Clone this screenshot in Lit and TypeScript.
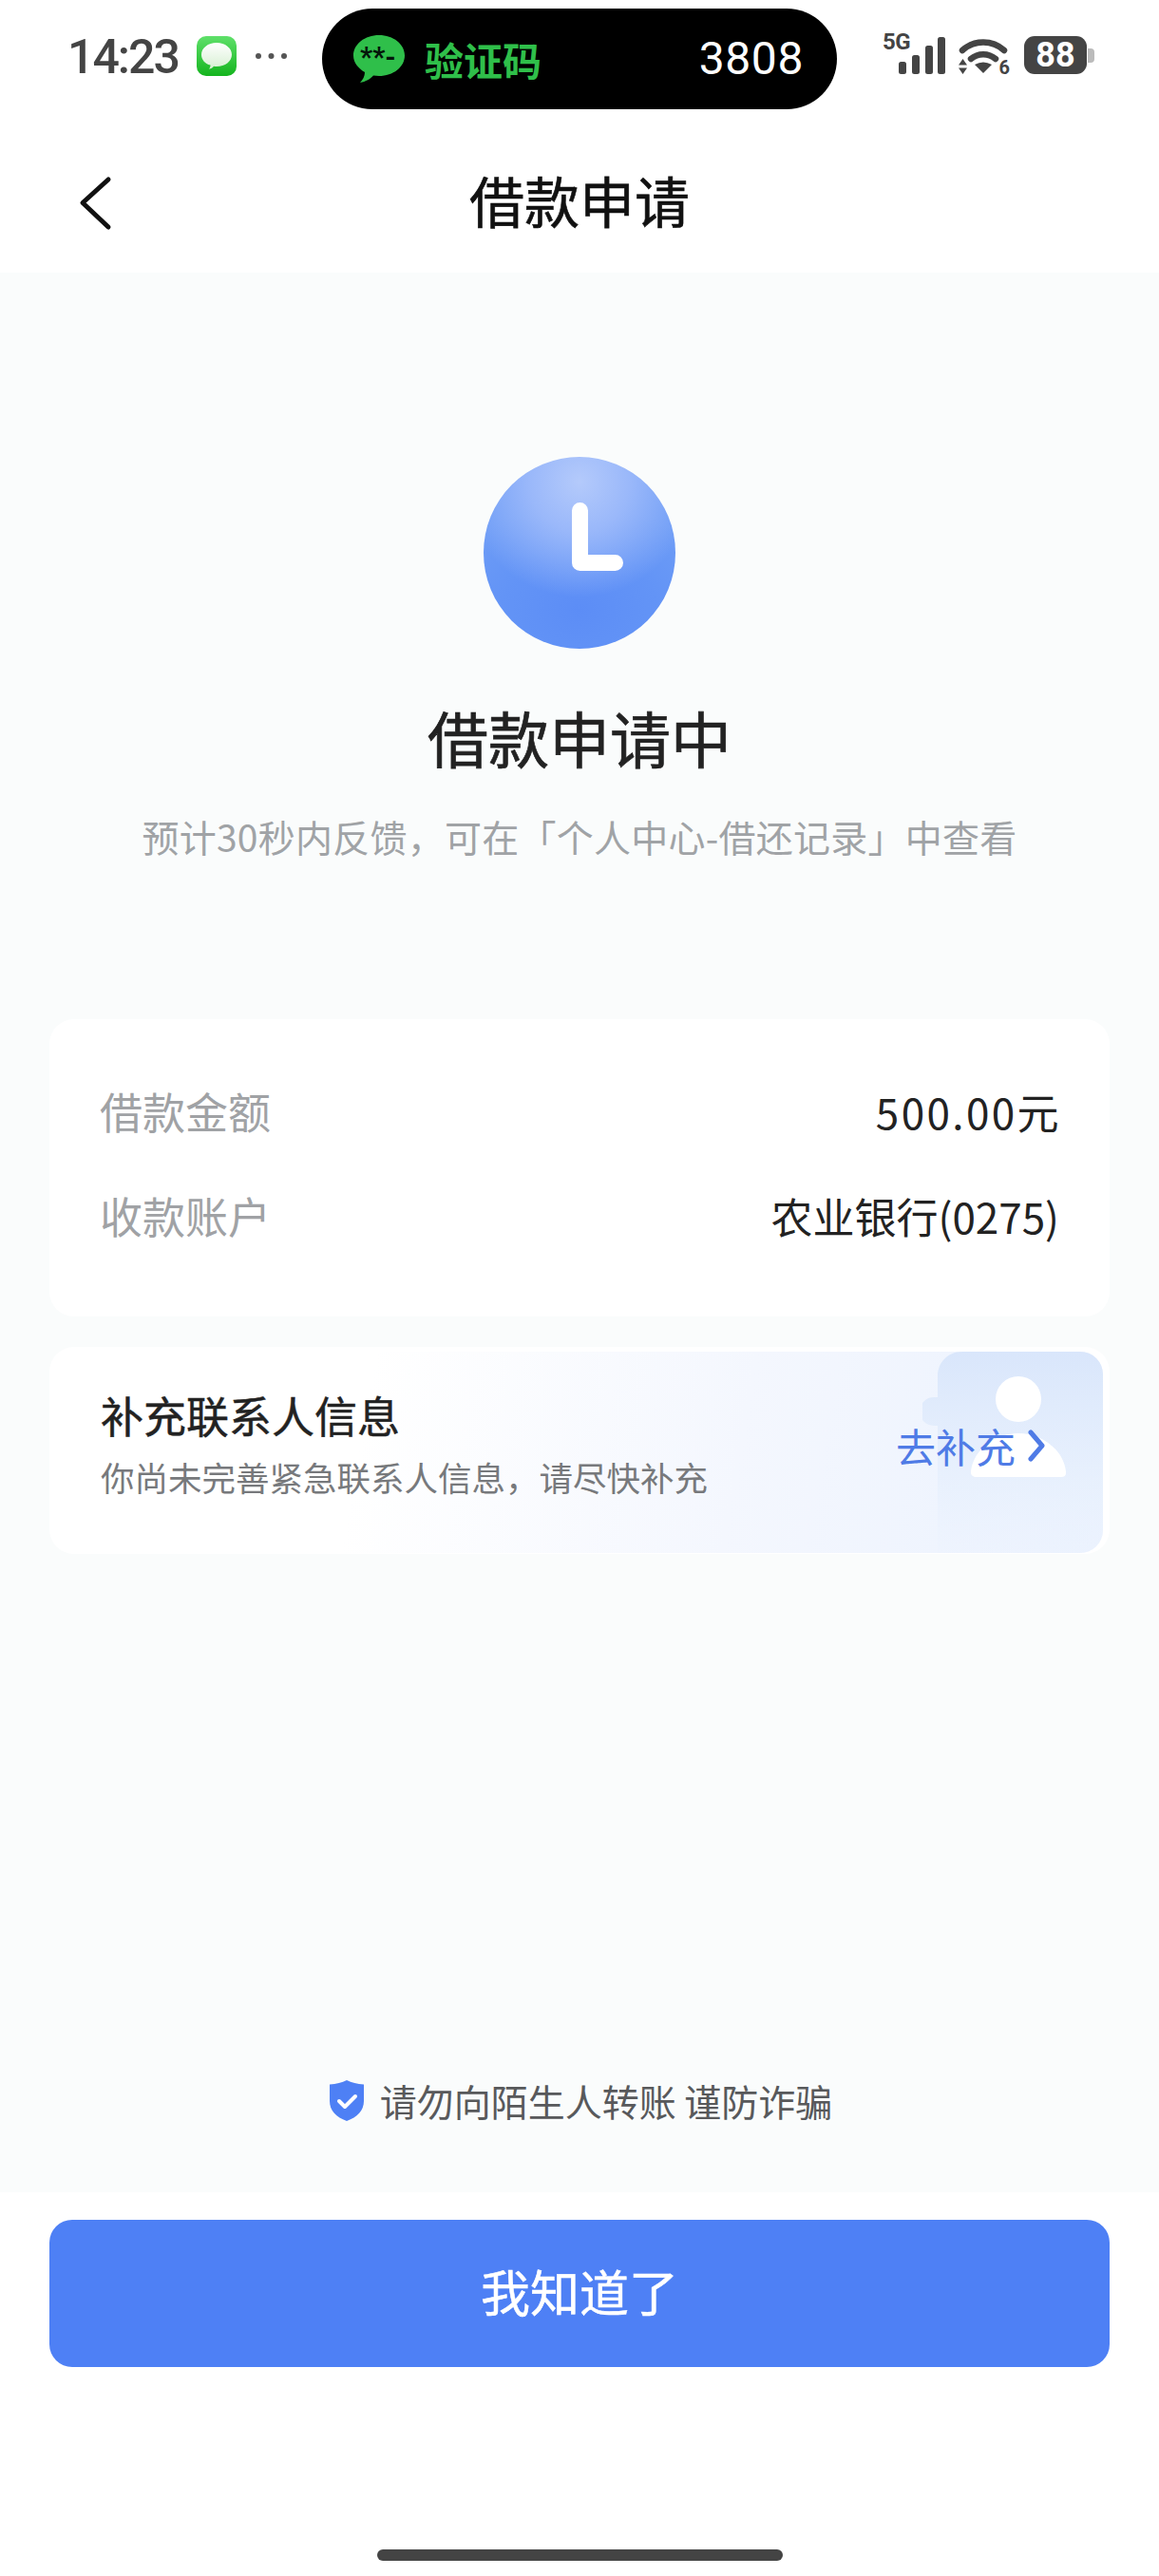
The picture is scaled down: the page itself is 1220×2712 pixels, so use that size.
import { LitElement, html, css } from "lit";
import { customElement } from "lit/decorators.js";

@customElement("app-root")
export class AppRoot extends LitElement {
  static styles = css`
    :host { display: flex; flex-direction: column; width: 1220px; height: 2712px; background: #fff; overflow: hidden;
      font-family: "Noto Sans CJK SC", "Noto Sans", sans-serif; color: #222; }
    * { box-sizing: border-box; }
    svg { display: block; flex: none; }
    .status { height: 125px; display: flex; align-items: flex-start; padding-left: 71px; position: relative; }
    .time { font: 500 50px/50px Roboto, sans-serif; letter-spacing: -2px; color: #444; margin-top: 35px; width: 136px; white-space: nowrap; }
    .msg { margin-top: 38px; }
    .dots { margin: 54px 0 0 19px; }
    .pill { width: 542px; height: 106px; margin: 9px 0 0 36px; background: #000; border-radius: 53px; display: flex; align-items: center; padding: 0 35px 0 33px; }
    .pill-name { font-size: 41px; line-height: 50px; font-weight: 700; color: #2fbf4a; margin-left: 21px; flex: 1; }
    .pill-code { font: 400 48px/50px Roboto, sans-serif; color: #fff; letter-spacing: 0.6px; }
    .net { position: relative; width: 117px; height: 50px; margin: 33px 0 0 65px; }
    .net-5g { position: absolute; left: -17px; top: 0; font: 700 24px/22px Roboto, sans-serif; color: #444; letter-spacing: -0.5px; }
    .net-6 { position: absolute; right: 0; bottom: 3px; font: 700 20px/18px Roboto, sans-serif; color: #444; }
    .battery { position: relative; width: 66px; height: 40px; margin: 38px 0 0 15px; background: #444; border-radius: 11px; color: #fff;
      font: 700 36px/40px Roboto, sans-serif; text-align: center; }
    .battery::after { content: ""; position: absolute; left: 67px; top: 13px; width: 7px; height: 15px; background: #bbb; border-radius: 0 4px 4px 0; }
    .nav { height: 162px; position: relative; display: flex; align-items: center; justify-content: center; }
    .back { position: absolute; left: 82px; top: 60px; }
    .nav-title { font-size: 58px; line-height: 70px; font-weight: 400; -webkit-text-stroke: 0.6px #111; color: #111; margin-top: 8px; }
    main { flex: 1; background: #fafcfc; display: flex; flex-direction: column; align-items: center; padding: 194px 52px 72px; }
    .clock { width: 202px; height: 202px; border-radius: 50%; flex: none; display: flex;
      background: radial-gradient(circle at 50% 13%, #b4cafb 0, #9ab8fa 26%, rgba(142,176,249,0) 60%),
        radial-gradient(ellipse 75% 55% at 50% 80%, #5c8df6 0, #6394f6 55%, #6d9cf6 100%); }
    .title { margin-top: 47px; font-size: 64px; line-height: 90px; font-weight: 400; -webkit-text-stroke: 0.7px #222; color: #222; }
    .sub { margin-top: 35px; font-size: 39px; line-height: 50px; letter-spacing: 0.25px; color: #a0a3a6; white-space: nowrap; }
    .card { width: 100%; background: #fff; border-radius: 26px; flex: none; }
    .info { margin-top: 168px; padding: 67px 53px 76px; display: flex; flex-direction: column; gap: 50px; }
    .row { display: flex; justify-content: space-between; align-items: center; height: 60px; font-size: 45px; line-height: 60px; }
    .row .label { color: #a0a2a5; }
    .row .value { color: #222; font-size: 44px; }
    .row .amount { letter-spacing: 2.4px; margin-right: -2px; }
    .contact { margin-top: 32px; height: 218px; padding: 5px 7px 0 0; position: relative; }
    .contact-bg { height: 212px; border-radius: 0 24px 24px 0; background: linear-gradient(100deg, rgba(255,255,255,0) 30%, #f4f7fe 65%, #ebf2fe 100%); position: relative; overflow: hidden; }
    .decor { position: absolute; right: 0; top: 0; }
    .contact-text { position: absolute; left: 54px; top: 42px; }
    .contact-title { font-size: 45px; line-height: 60px; font-weight: 400; -webkit-text-stroke: 0.5px #222; color: #222; }
    .contact-sub { font-size: 35.5px; line-height: 50px; color: #77797c; margin-top: 10px; white-space: nowrap; }
    .go { position: absolute; left: 891px; top: 74px; display: flex; align-items: center; gap: 13px; font-size: 42px; line-height: 60px; color: #4f7be6; }
    .notice { margin-top: auto; margin-left: 3px; display: flex; align-items: center; gap: 17px; font-size: 39px; line-height: 50px; color: #58595b; white-space: nowrap; }
    footer { height: 404px; background: #fff; padding: 29px 52px 0; display: flex; flex-direction: column; align-items: center; }
    .btn { width: 100%; height: 155px; background: #4e80f5; border-radius: 24px; color: #fff; font-size: 52px; font-weight: 400; -webkit-text-stroke: 0.5px #fff; line-height: 150px; text-align: center; }
    .home { width: 427px; height: 12px; border-radius: 6px; background: #444; margin-top: 192px; }
  `;

  render() {
    return html`
      <header>
        <div class="status">
          <div class="time">14:23</div>
          <svg class="msg" width="42" height="42" viewBox="0 0 42 42">
            <defs>
              <linearGradient id="g" x1="0" y1="0" x2="0" y2="1"><stop offset="0" stop-color="#5fe06a"/><stop offset="1" stop-color="#14b41e"/></linearGradient>
              <linearGradient id="w" x1="0" y1="0" x2="0" y2="1"><stop offset="0" stop-color="#fff"/><stop offset="1" stop-color="#d6efd2"/></linearGradient>
            </defs>
            <rect width="42" height="42" rx="10" fill="url(#g)"/>
            <path d="M21 7c9 0 16 5.500 16 12.500S30 32 21 32c-1 0-2 0-3-.2-1 1.500-3 2.700-5 3 1-1.200 1.500-2.700 1.500-4.200C8.500 29 5 24.700 5 19.500 5 12.500 12 7 21 7z" fill="url(#w)"/>
          </svg>
          <svg class="dots" width="35" height="10" viewBox="0 0 35 10" fill="#555">
            <circle cx="4" cy="5" r="3"/><circle cx="17.500" cy="5" r="3"/><circle cx="31" cy="5" r="3"/>
          </svg>
          <div class="pill">
            <svg width="54" height="50" viewBox="0 0 54 50">
              <path d="M27 0c15 0 27 9.500 27 21.500S42 43 27 43c-2 0-4-.2-6-.5C18 46 13 49 7 50c3-3 5-7 5-11C5 35 0 28.700 0 21.500 0 9.500 12 0 27 0z" fill="#2fbf4a"/>
              <text x="7" y="33" font-family="Roboto, sans-serif" font-size="29" font-weight="700" fill="#04170a">**-</text>
            </svg>
            <div class="pill-name">验证码</div>
            <div class="pill-code">3808</div>
          </div>
          <div class="net">
            <div class="net-5g">5G</div>
            <svg width="117" height="50" viewBox="0 0 117 50">
              <g fill="#444">
                <rect x="0" y="32" width="8" height="13" rx="2.500"/><rect x="14" y="25" width="8" height="20" rx="2.500"/>
                <rect x="28" y="15" width="8" height="30" rx="2.500"/><rect x="41" y="6" width="8" height="39" rx="2.500"/>
                <path d="M80 35Q89 30 98 35L89 44z"/>
                <path d="M67.500 29l4.500 6.500H63zM67.500 45L63 38.500h9z"/>
              </g>
              <g fill="none" stroke="#444" stroke-width="6.500" stroke-linecap="round">
                <path d="M67 20A33 33 0 0 1 111 20"/>
                <path d="M76 29A20 20 0 0 1 102 29"/>
              </g>
            </svg>
            <div class="net-6">6</div>
          </div>
          <div class="battery">88</div>
        </div>
        <div class="nav">
          <svg class="back" width="38" height="58" viewBox="0 0 38 58" fill="none" stroke="#111" stroke-width="5" stroke-linecap="round" stroke-linejoin="round">
            <path d="M32 4 5 28.500 32 54"/>
          </svg>
          <div class="nav-title">借款申请</div>
        </div>
      </header>
      <main>
        <div class="clock">
          <svg width="202" height="202" viewBox="0 0 202 202">
            <path d="M101.500 56.500V111.500H138.500" fill="none" stroke="#fff" stroke-width="17" stroke-linecap="round" stroke-linejoin="round"/>
          </svg>
        </div>
        <div class="title">借款申请中</div>
        <div class="sub">预计30秒内反馈，可在「个人中心-借还记录」中查看</div>
        <div class="card info">
          <div class="row"><span class="label">借款金额</span><span class="value amount">500.00元</span></div>
          <div class="row"><span class="label">收款账户</span><span class="value">农业银行(0275)</span></div>
        </div>
        <div class="card contact">
          <div class="contact-bg">
            <svg class="decor" width="190" height="212" viewBox="0 0 190 212">
              <defs>
                <linearGradient id="d" x1="0" y1="0" x2="0" y2="1"><stop offset="0" stop-color="#d9e6fb"/><stop offset=".7" stop-color="#e7f0fd" stop-opacity=".7"/><stop offset="1" stop-color="#ebf2fe" stop-opacity=".2"/></linearGradient>
              </defs>
              <path d="M16 212V78H12a12 12 0 0 1 0-30h4V26C16 11 27 0 42 0h148v212z" fill="url(#d)"/>
              <circle cx="101" cy="50" r="24" fill="#fff"/>
              <path d="M51 126c3-25 28-40 50-40s47 15 50 40c.5 4-1 6-5 6H57c-4 0-6.500-2-6-6z" fill="#fff"/>
            </svg>
          </div>
          <div class="contact-text">
            <div class="contact-title">补充联系人信息</div>
            <div class="contact-sub">你尚未完善紧急联系人信息，请尽快补充</div>
          </div>
          <div class="go">去补充
            <svg width="18" height="34" viewBox="0 0 18 34" fill="none" stroke="#4f7be6" stroke-width="5" stroke-linecap="round" stroke-linejoin="round"><path d="M3 3l12 14L3 31"/></svg>
          </div>
        </div>
        <div class="notice">
          <svg width="36" height="43" viewBox="0 0 36 43">
            <path d="M18 0c5 2.500 11 4 18 4.500V22c0 10-7 17-18 21C7 39 0 32 0 22V4.500C7 4 13 2.500 18 0z" fill="#4e80f5"/>
            <path d="M10 22l6 6 11-11" fill="none" stroke="#fff" stroke-width="4" stroke-linecap="round" stroke-linejoin="round"/>
          </svg>
          <span>请勿向陌生人转账 谨防诈骗</span>
        </div>
      </main>
      <footer>
        <div class="btn">我知道了</div>
        <div class="home"></div>
      </footer>
    `;
  }
}
